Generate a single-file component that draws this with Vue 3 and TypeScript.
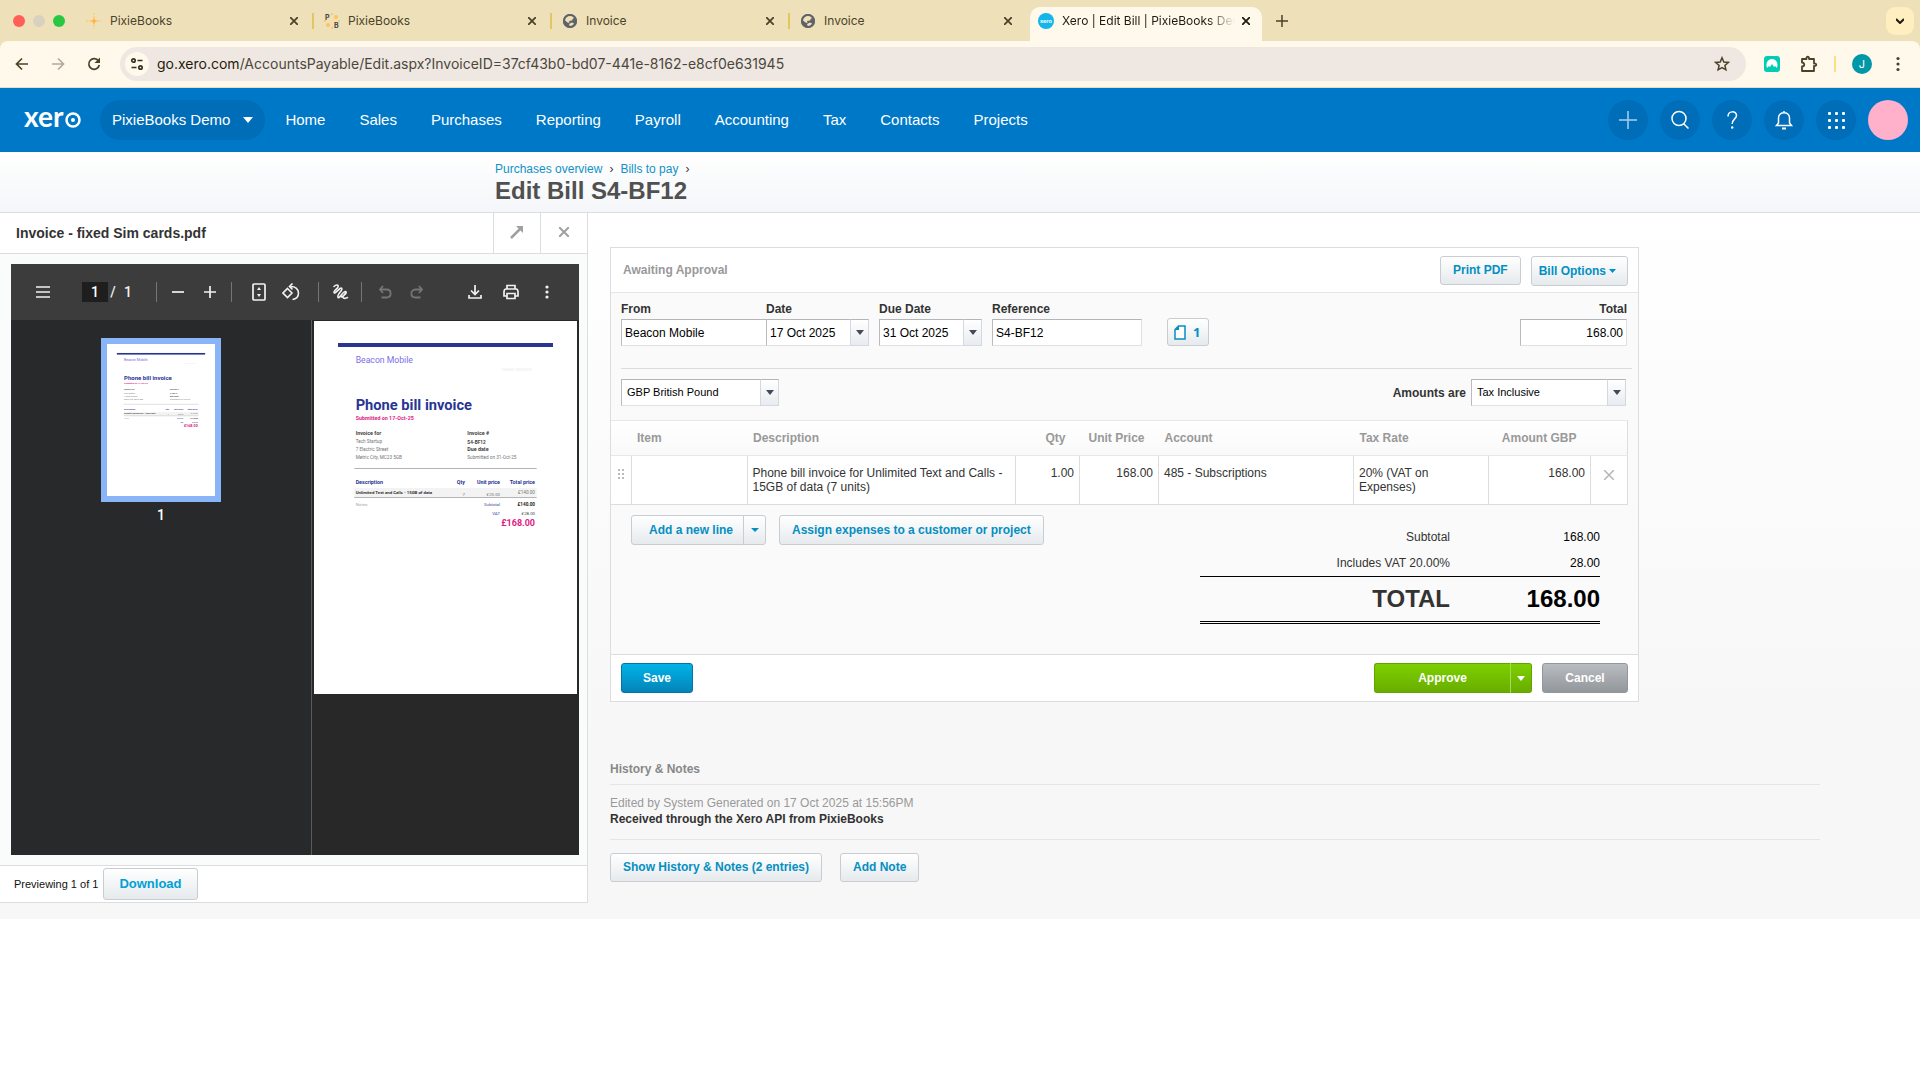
<script setup lang="ts">
import { h, ref } from 'vue'

interface Tab {
  title: string
  icon: 'spark' | 'pb' | 'globe' | 'xero'
  active?: boolean
}

const tabs: Tab[] = [
  { title: 'PixieBooks', icon: 'spark' },
  { title: 'PixieBooks', icon: 'pb' },
  { title: 'Invoice', icon: 'globe' },
  { title: 'Invoice', icon: 'globe' },
  { title: 'Xero | Edit Bill | PixieBooks Demo', icon: 'xero', active: true },
]

const nav = ['Home', 'Sales', 'Purchases', 'Reporting', 'Payroll', 'Accounting', 'Tax', 'Contacts', 'Projects']

const bill = ref({
  from: 'Beacon Mobile',
  date: '17 Oct 2025',
  due: '31 Oct 2025',
  reference: 'S4-BF12',
  total: '168.00',
  currency: 'GBP British Pound',
  tax: 'Tax Inclusive',
})

const lines = [
  {
    item: '',
    description: 'Phone bill invoice for Unlimited Text and Calls - 15GB of data (7 units)',
    qty: '1.00',
    price: '168.00',
    account: '485 - Subscriptions',
    tax: '20% (VAT on Expenses)',
    amount: '168.00',
  },
]

// Supplier document, drawn once as a full page and once as its thumbnail.
const navy = '#283593'
const pink = '#e01b84'
const dark = '#424242'
const grey = '#757575'

// [text, x, baseline, size, colour, bold, right-aligned]
type PageText = [string, number, number, number, string, boolean?, boolean?]
const pageTexts: PageText[] = [
  ['Beacon Mobile', 125, 126, 26, '#7a6ee6'],
  ['DEMO INVOICE', 653, 150, 13, '#ebebeb', false, true],
  ['Phone bill invoice', 125, 267, 44, navy, true],
  ['Submitted on 17-Oct-25', 125, 297, 16, pink, true],
  ['Invoice for', 125, 342, 16, dark, true],
  ['Tech Startup', 125, 366, 14, grey],
  ['7 Electric Street', 125, 390, 14, grey],
  ['Metric City, MC23 5GB', 125, 414, 14, grey],
  ['Invoice #', 460, 342, 16, dark, true],
  ['S4-BF12', 460, 368, 14, dark, true],
  ['Due date', 460, 390, 16, dark, true],
  ['Submitted on 31-Oct-25', 460, 414, 14, grey],
  ['Description', 125, 489, 16, navy, true],
  ['Qty', 453, 489, 16, navy, true, true],
  ['Unit price', 558, 489, 16, navy, true, true],
  ['Total price', 663, 489, 16, navy, true, true],
  ['Unlimited Text and Calls - 15GB of data', 125, 519, 13, '#333', true],
  ['7', 453, 524, 13, grey, false, true],
  ['£20.00', 558, 524, 13, grey, false, true],
  ['£140.00', 663, 519, 14, grey, false, true],
  ['Notes:', 125, 555, 13, '#a8a8a8'],
  ['Subtotal', 558, 555, 13, '#3d4aa8', false, true],
  ['£140.00', 663, 555, 14, '#222', true, true],
  ['VAT', 558, 581, 13, '#3d4aa8', false, true],
  ['£28.00', 663, 581, 13, '#444', false, true],
  ['£168.00', 663, 614, 27, pink, true, true],
]

const bar = (x: number, y: number, width: number, height: number, fill: string) =>
  h('rect', { x, y, width, height, fill })

const PdfPage = () =>
  h('svg', { viewBox: '0 0 789 1119', preserveAspectRatio: 'none', 'font-family': 'Roboto, sans-serif' }, [
    bar(0, 0, 789, 1119, '#fff'),
    bar(72, 66, 645, 12, navy),
    bar(121, 441, 547, 3, '#b4b4b4'),
    bar(121, 501, 547, 27, '#f3f3f3'),
    bar(121, 528, 547, 3, '#b4b4b4'),
    ...pageTexts.map(([text, x, y, size, fill, bold, right]) =>
      h(
        'text',
        { x, y, fill, 'font-size': size, 'font-weight': bold ? 700 : 400, 'text-anchor': right ? 'end' : 'start' },
        text,
      ),
    ),
  ])
</script>

<template>
  <div class="window">
    <header class="tabstrip">
      <div class="lights"><i class="l-close"></i><i class="l-min"></i><i class="l-max"></i></div>
      <div v-for="(t, i) in tabs" :key="i" class="tab" :class="{ active: t.active, divided: i < 3 }">
        <svg v-if="t.icon === 'spark'" width="18" height="18" viewBox="0 0 18 18">
          <path d="M9 1v16M1 9h16" stroke="#fbd28c" stroke-width="2" stroke-dasharray="2 1" />
          <path d="M9 5l1 3 3 1-3 1-1 3-1-3-3-1 3-1z" fill="#ffb43c" />
        </svg>
        <svg v-else-if="t.icon === 'pb'" width="18" height="18" viewBox="0 0 18 18">
          <circle cx="9" cy="9" r="4" fill="#f6dfa9" />
          <g fill="#f9c465"><circle cx="13" cy="5" r="2" /><circle cx="5" cy="13" r="2" /><circle cx="9" cy="2" r="1" /><circle cx="2" cy="9" r="1" /><circle cx="16" cy="9" r="1" /><circle cx="9" cy="16" r="1" /></g>
          <text x="2" y="8" class="pb">P</text><text x="11" y="16" class="pb">B</text>
        </svg>
        <svg v-else-if="t.icon === 'globe'" width="18" height="18" viewBox="0 0 18 18">
          <circle cx="9" cy="9" r="7" fill="#5f6368" />
          <path d="M9 3.500c2-.5 4 .7 5 2.500l-2 .5-1 2-3 .5.5 2-2-.5-3-2.500c.5-2.500 2-4 5.500-4.500zM8 12l3-1.500 2 1-1 2.500-3 1z" fill="#eee1b9" />
          <circle cx="9" cy="9" r="6" fill="none" stroke="#5f6368" stroke-width="2" />
        </svg>
        <svg v-else width="18" height="18" viewBox="0 0 18 18">
          <circle cx="9" cy="9" r="8" fill="#13b5ea" />
          <text x="9" y="11" text-anchor="middle" class="favx">xero</text>
        </svg>
        <span class="tab-title">{{ t.title }}</span>
        <button class="tab-x" aria-label="Close tab">
          <svg width="8" height="8" viewBox="0 0 8 8"><path d="M0 0l8 8M8 0L0 8" stroke="currentColor" stroke-width="1.800" /></svg>
        </button>
      </div>
      <button class="plus" aria-label="New tab">
        <svg width="12" height="12" viewBox="0 0 12 12"><path d="M6 0v12M0 6h12" stroke="#4b4329" stroke-width="1.500" /></svg>
      </button>
      <button class="tab-search" aria-label="Search tabs">
        <svg width="8" height="6" viewBox="0 0 8 6"><path d="M0 1l4 4 4-4" fill="none" stroke="#1f1b0e" stroke-width="2" /></svg>
      </button>
    </header>

    <div class="toolbar">
      <button class="tb" aria-label="Back"><svg width="16" height="16" viewBox="0 0 16 16"><path d="M14 8H3M8 2.500L2.500 8 8 13.500" fill="none" stroke="#4b4329" stroke-width="1.700" /></svg></button>
      <button class="tb" aria-label="Forward"><svg width="16" height="16" viewBox="0 0 16 16"><path d="M2 8h11M8 2.500L13.500 8 8 13.500" fill="none" stroke="#b3ab97" stroke-width="1.700" /></svg></button>
      <button class="tb" aria-label="Reload"><svg width="16" height="16" viewBox="0 0 16 16"><path d="M12.500 5A5.300 5.300 0 1 0 13.300 9" fill="none" stroke="#4b4329" stroke-width="1.700" /><path d="M14 1.500V7H8.500z" fill="#4b4329" /></svg></button>
      <div class="address">
        <button class="site" aria-label="Site information">
          <svg width="14" height="14" viewBox="0 0 14 14" fill="none" stroke="#35301f" stroke-width="1.700"><circle cx="3.500" cy="3.500" r="1.700" /><path d="M7.500 3.500h5M1.500 10.500h5" /><circle cx="10.500" cy="10.500" r="1.700" /></svg>
        </button>
        <span class="url"><b>go.xero.com</b>/AccountsPayable/Edit.aspx?InvoiceID=37cf43b0-bd07-441e-8162-e8cf0e631945</span>
        <button class="star" aria-label="Bookmark">
          <svg width="16" height="16" viewBox="0 0 16 16"><path d="M8 1.800l1.800 4.200 4.500.4-3.400 3 1 4.400L8 11.500l-3.900 2.300 1-4.400-3.400-3 4.500-.4z" fill="none" stroke="#4b4329" stroke-width="1.500" /></svg>
        </button>
      </div>
      <div class="ext">
        <svg width="16" height="16" viewBox="0 0 16 16"><rect width="16" height="16" rx="3" fill="#00cdb4" /><path d="M3 12C1 6 5 3 8 3s7 3 5 9l-2-2-1 1-2-3-2 3-1-1z" fill="#fff" /></svg>
        <svg width="18" height="18" viewBox="0 0 18 18"><path d="M2 4h4.500c-.5-3 3-3 2.500 0H14v4.500c3-.5 3 3 0 2.500V16H2v-4.500c3 0 3-4 0-4z" fill="none" stroke="#4b4329" stroke-width="1.800" stroke-linejoin="round" /></svg>
        <i class="ext-sep"></i>
        <span class="me">J</span>
        <svg width="4" height="16" viewBox="0 0 4 16" fill="#4b4329"><circle cx="2" cy="2.500" r="1.600" /><circle cx="2" cy="8" r="1.600" /><circle cx="2" cy="13.500" r="1.600" /></svg>
      </div>
    </div>

    <nav class="bluebar">
      <a href="#" class="logo" aria-label="Xero">
        <svg width="58" height="40" viewBox="0 0 58 40">
          <text x="0" y="27" class="logo-t">xer</text>
          <circle cx="49" cy="20" r="6.500" fill="none" stroke="#fff" stroke-width="2.500" />
          <circle cx="49" cy="20" r="2" fill="#fff" />
        </svg>
      </a>
      <button class="org">PixieBooks Demo <svg width="10" height="6" viewBox="0 0 10 6"><path d="M0 0h10L5 6z" fill="#fff" /></svg></button>
      <div class="links"><a v-for="n in nav" :key="n" href="#">{{ n }}</a></div>
      <div class="round">
        <button aria-label="Create new"><svg width="18" height="18" viewBox="0 0 18 18"><path d="M9 0v18M0 9h18" stroke="#a9d0ec" stroke-width="1.500" /></svg></button>
        <button aria-label="Search"><svg width="20" height="20" viewBox="0 0 20 20" fill="none" stroke="#fff" stroke-width="1.500"><circle cx="9" cy="8.500" r="7" /><path d="M13.500 13.500l5 5" /></svg></button>
        <button aria-label="Help"><svg width="12" height="20" viewBox="0 0 12 20"><path d="M2 6.500c0-6 8.500-6 8.500-1C10.500 9 6.200 9 6.200 14" fill="none" stroke="#fff" stroke-width="1.500" /><circle cx="6.200" cy="17.500" r="1.200" fill="#fff" /></svg></button>
        <button aria-label="Notifications"><svg width="20" height="20" viewBox="0 0 20 20" fill="none" stroke="#fff" stroke-width="1.500"><path d="M2.500 15.500h15L15.500 13V8c0-7-11-7-11 0v5zM10 1v2" /><path d="M8 18.500h4" stroke-width="2" /></svg></button>
        <button aria-label="Apps"><svg width="18" height="18" viewBox="0 0 18 18" fill="#fff"><g v-for="y in 3" :key="y"><rect v-for="x in 3" :key="x" :x="x * 7 - 6" :y="y * 7 - 6" width="3" height="3" rx="1" /></g></svg></button>
        <button class="avatar" aria-label="Profile"></button>
      </div>
    </nav>

    <section class="heading">
      <p><a href="#">Purchases overview</a><span>›</span><a href="#">Bills to pay</a><span>›</span></p>
      <h1>Edit Bill S4-BF12</h1>
    </section>

    <div class="workspace">
      <aside class="preview">
        <div class="preview-head">
          <h2>Invoice - fixed Sim cards.pdf</h2>
          <button aria-label="Expand"><svg width="14" height="14" viewBox="0 0 14 14"><path d="M1 13L10 4" stroke="#a0a0a0" stroke-width="2.500" /><path d="M6 1h7v7z" fill="#a0a0a0" /></svg></button>
          <button aria-label="Close preview"><svg width="10" height="10" viewBox="0 0 10 10"><path d="M0 0l10 10M10 0L0 10" stroke="#a0a0a0" stroke-width="2" /></svg></button>
        </div>
        <div class="viewer">
          <div class="pdfbar">
            <button aria-label="Menu"><svg width="14" height="12" viewBox="0 0 14 12"><path d="M0 1h14M0 6h14M0 11h14" stroke="currentColor" stroke-width="1.700" /></svg></button>
            <div class="pageno"><input aria-label="Page" value="1" /><span class="slash">/</span><span class="of">1</span></div>
            <i></i>
            <button aria-label="Zoom out"><svg width="12" height="12" viewBox="0 0 12 12"><path d="M0 6h12" stroke="currentColor" stroke-width="1.700" /></svg></button>
            <button aria-label="Zoom in"><svg width="12" height="12" viewBox="0 0 12 12"><path d="M0 6h12M6 0v12" stroke="currentColor" stroke-width="1.700" /></svg></button>
            <i></i>
            <button aria-label="Fit to page" class="p-fit"><svg width="14" height="18" viewBox="0 0 14 18"><rect x="1" y="1" width="12" height="16" rx="1" fill="none" stroke="currentColor" stroke-width="1.700" /><path d="M7 4l2 3H5zM7 14l2-3H5z" fill="currentColor" /></svg></button>
            <button aria-label="Rotate" class="p-rotate"><svg width="18" height="18" viewBox="0 0 18 18" fill="none" stroke="currentColor" stroke-width="1.600"><path d="M5.500 5.500L10 10l-4.500 4.500L1 10z" /><path d="M8 3.500c5-.5 8.500 2.500 8.500 6.500 0 3.500-2.500 6-6 6.500M10.500.5L7.500 3.500l3 3" /></svg></button>
            <i></i>
            <button aria-label="Draw"><svg width="18" height="18" viewBox="0 0 18 18" fill="none" stroke="currentColor" stroke-width="1.600" stroke-linecap="round"><path d="M3 3.500C5 1.500 8 1.500 7 4S2.500 7.500 3 9.500 7 7 9 5.500s2.500.5 1 2.500-4 4.500-3 6.500S12 8 14.500 8.500 11 12.500 12 14.500s3 .5 4.500 0M14.500 8.500c2 1-1 4-4 5.500" /></svg></button>
            <i></i>
            <button aria-label="Undo" class="off p-undo"><svg width="14" height="14" viewBox="0 0 14 14" fill="none" stroke="currentColor" stroke-width="1.800"><path d="M5 1L2 4.500 5 8M2 4.500h6.500c5.500 0 5.500 8 0 8H3.500" /></svg></button>
            <button aria-label="Redo" class="off"><svg width="14" height="14" viewBox="0 0 14 14" fill="none" stroke="currentColor" stroke-width="1.800"><path d="M9 1l3 3.500L9 8M12 4.500H5.500c-5.500 0-5.500 8 0 8h5" /></svg></button>
            <span class="grow"></span>
            <button aria-label="Download file" class="end"><svg width="14" height="14" viewBox="0 0 14 14" fill="none" stroke="currentColor" stroke-width="1.700"><path d="M7 0v9M3 5.500l4 4 4-4M1 10v3h12v-3" /></svg></button>
            <button aria-label="Print" class="end"><svg width="16" height="16" viewBox="0 0 16 16" fill="none" stroke="currentColor" stroke-width="1.700"><path d="M4 5V1.500h8V5M4 12H1V8c0-2 1-3 2-3h10c1 0 2 1 2 3v4h-3" /><path d="M4 9.500h8v5H4z" /></svg></button>
            <button aria-label="More" class="end"><svg width="4" height="14" viewBox="0 0 4 14" fill="currentColor"><circle cx="2" cy="2" r="1.600" /><circle cx="2" cy="7" r="1.600" /><circle cx="2" cy="12" r="1.600" /></svg></button>
          </div>
          <div class="pdfbody">
            <div class="thumbs">
              <div class="thumb"><PdfPage class="page" /></div>
              <span>1</span>
            </div>
            <div class="sheet"><PdfPage class="page" /></div>
          </div>
        </div>
        <div class="preview-foot"><span>Previewing 1 of 1</span><button class="btn">Download</button></div>
      </aside>

      <main>
        <form class="card" @submit.prevent>
          <div class="card-head">
            <strong>Awaiting Approval</strong>
            <button class="btn">Print PDF</button>
            <button class="btn opts">Bill Options<svg width="7" height="4" viewBox="0 0 7 4"><path d="M0 0h7L3.500 4z" fill="currentColor" /></svg></button>
          </div>

          <div class="fields">
            <div class="field from"><label for="from">From</label><input id="from" v-model="bill.from" /></div>
            <div class="field date">
              <label for="date">Date</label>
              <div class="combo"><input id="date" v-model="bill.date" /><button aria-label="Pick date"><i class="caret"></i></button></div>
            </div>
            <div class="field date">
              <label for="due">Due Date</label>
              <div class="combo"><input id="due" v-model="bill.due" /><button aria-label="Pick due date"><i class="caret"></i></button></div>
            </div>
            <div class="field refn"><label for="ref">Reference</label><input id="ref" v-model="bill.reference" /></div>
            <button class="btn files" aria-label="1 file attached">
              <svg width="12" height="15" viewBox="0 0 12 15"><path d="M4.500 1H11v13H1V4.500z" fill="#fff" stroke="#048fc2" stroke-width="1.500" /><path d="M1 5l4-4v4z" fill="#048fc2" /></svg>1
            </button>
            <div class="field total"><label for="total">Total</label><input id="total" v-model="bill.total" /></div>
          </div>

          <div class="terms">
            <span class="pick currency">
              <select v-model="bill.currency" aria-label="Currency"><option>GBP British Pound</option></select>
              <span class="arrow"><i class="caret"></i></span>
            </span>
            <label for="tax">Amounts are</label>
            <span class="pick tax">
              <select id="tax" v-model="bill.tax"><option>Tax Inclusive</option></select>
              <span class="arrow"><i class="caret"></i></span>
            </span>
          </div>

          <table>
            <colgroup>
              <col class="c-grip" /><col class="c-item" /><col /><col class="c-qty" /><col class="c-price" />
              <col class="c-account" /><col class="c-tax" /><col class="c-amount" /><col class="c-del" />
            </colgroup>
            <thead>
              <tr>
                <th></th><th>Item</th><th>Description</th><th class="num">Qty</th><th class="num">Unit Price</th>
                <th>Account</th><th>Tax Rate</th><th class="num">Amount GBP</th><th></th>
              </tr>
            </thead>
            <tbody>
              <tr v-for="(l, i) in lines" :key="i">
                <td class="grip"><svg width="8" height="12" viewBox="0 0 8 12" fill="#bbb"><g v-for="y in 3" :key="y"><rect x="1" :y="y * 4 - 3" width="2" height="2" /><rect x="5" :y="y * 4 - 3" width="2" height="2" /></g></svg></td>
                <td>{{ l.item }}</td>
                <td>{{ l.description }}</td>
                <td class="num">{{ l.qty }}</td>
                <td class="num">{{ l.price }}</td>
                <td>{{ l.account }}</td>
                <td>{{ l.tax }}</td>
                <td class="num">{{ l.amount }}</td>
                <td class="del"><button aria-label="Remove line"><svg width="10" height="10" viewBox="0 0 10 10"><path d="M0 0l10 10M10 0L0 10" stroke="#b5b5b5" stroke-width="1.500" /></svg></button></td>
              </tr>
            </tbody>
          </table>

          <div class="below">
            <div class="split">
              <button class="btn">Add a new line</button>
              <button class="btn" aria-label="Add several lines"><svg width="8" height="4" viewBox="0 0 8 4"><path d="M0 0h8L4 4z" fill="currentColor" /></svg></button>
            </div>
            <button class="btn">Assign expenses to a customer or project</button>
            <dl class="sums">
              <div><dt>Subtotal</dt><dd>168.00</dd></div>
              <div><dt>Includes VAT 20.00%</dt><dd>28.00</dd></div>
              <div class="grand"><dt>TOTAL</dt><dd>168.00</dd></div>
            </dl>
          </div>

          <div class="card-foot">
            <button class="act save">Save</button>
            <div class="approve">
              <button class="act">Approve</button>
              <button class="act" aria-label="Approve options"><svg width="8" height="5" viewBox="0 0 8 5"><path d="M0 0h8L4 5z" fill="#fff" /></svg></button>
            </div>
            <button class="act cancel">Cancel</button>
          </div>
        </form>

        <section class="history">
          <h3>History &amp; Notes</h3>
          <div class="entry">
            <p>Edited by System Generated on 17 Oct 2025 at 15:56PM</p>
            <strong>Received through the Xero API from PixieBooks</strong>
          </div>
          <div class="history-actions">
            <button class="btn">Show History &amp; Notes (2 entries)</button>
            <button class="btn">Add Note</button>
          </div>
        </section>
      </main>
    </div>
  </div>
</template>

<style>
body {
  margin: 0;
  background: #fff;
}
</style>

<style scoped>
* {
  box-sizing: border-box;
}
.window {
  font-family: 'Liberation Sans', Arial, sans-serif;
  font-size: 12px;
  line-height: 14px;
  color: #333;
}
button,
input,
select {
  font: inherit;
  margin: 0;
}
button {
  padding: 0;
  border: 0;
  background: none;
  color: inherit;
}
a {
  text-decoration: none;
}
svg {
  display: block;
  flex: none;
}

/* Browser tabs */
.tabstrip {
  display: flex;
  align-items: center;
  height: 41px;
  background: #eee1b9;
  font-family: Inter, sans-serif;
  color: #4b4329;
  position: relative;
  z-index: 1;
}
.lights {
  display: flex;
  gap: 8px;
  width: 77px;
  padding-left: 13px;
}
.lights i {
  width: 12px;
  height: 12px;
  border-radius: 50%;
}
.l-close {
  background: #ff5f57;
}
.l-min {
  background: #d8d1bf;
}
.l-max {
  background: #28c840;
}
.tab {
  display: flex;
  align-items: center;
  gap: 7px;
  width: 238px;
  height: 41px;
  padding: 0 17px 0 8px;
  position: relative;
}
.divided::after {
  content: '';
  position: absolute;
  right: 1px;
  top: 13px;
  width: 2px;
  height: 16px;
  background: #e3c65c;
}
.tab.active {
  width: 232px;
  height: 34px;
  align-self: flex-end;
  margin-left: 1px;
  padding: 0 12px 6px 7px;
  background: #fff9ec;
  border-radius: 10px 10px 0 0;
  color: #1f1b0e;
}
.tab-title {
  flex: 1;
  overflow: hidden;
  white-space: nowrap;
}
.active .tab-title {
  mask-image: linear-gradient(90deg, #000 84%, transparent);
}
.pb {
  font: 700 7px Inter, sans-serif;
  fill: #444;
}
.favx {
  font: 700 6px Lato, sans-serif;
  fill: #fff;
}
.plus {
  margin-left: 14px;
}
.tab-search {
  display: grid;
  place-items: center;
  width: 28px;
  height: 28px;
  margin: 0 6px 0 auto;
  border-radius: 9px;
  background: #feeec0;
}

/* Browser toolbar */
.toolbar {
  display: flex;
  align-items: center;
  height: 47px;
  padding: 0 20px 0 14px;
  background: #fff9ec;
  border-bottom: 1px solid #e6decb;
  border-radius: 8px 8px 0 0;
  box-shadow: 0 -8px 0 #eee1b9;
}
.tb {
  width: 16px;
  margin-right: 20px;
}
.address {
  flex: 1;
  display: flex;
  align-items: center;
  height: 34px;
  margin-left: -2px;
  padding: 0 16px 0 5px;
  border-radius: 17px;
  background: #efe7e1;
}
.site {
  display: grid;
  place-items: center;
  width: 24px;
  height: 24px;
  border-radius: 50%;
  background: #fff9ec;
}
.url {
  flex: 1;
  margin-left: 8px;
  font: 14px/20px Inter, sans-serif;
  color: #4b473c;
}
.url b {
  font-weight: 400;
  color: #1f1b0e;
}
.ext {
  display: flex;
  align-items: center;
  gap: 16px;
  margin-left: 18px;
}
.ext svg:first-child {
  margin-right: 4px;
}
.ext-sep {
  width: 2px;
  height: 16px;
  background: #fbdf87;
}
.me {
  width: 20px;
  height: 20px;
  margin-right: 8px;
  border-radius: 50%;
  background: #0097a7;
  color: #fff;
  font: 11px/20px Inter, sans-serif;
  text-align: center;
}

/* Product navigation */
.bluebar {
  display: flex;
  align-items: center;
  height: 64px;
  padding: 0 12px 0 24px;
  background: #0078c8;
  color: #fff;
  font-size: 15px;
  line-height: 18px;
}
.logo {
  width: 76px;
}
.logo-t {
  font: 700 28px Lato, sans-serif;
  fill: #fff;
}
.org {
  display: flex;
  align-items: center;
  gap: 13px;
  height: 40px;
  padding: 0 12px;
  border-radius: 20px;
  background: #006db8;
  white-space: nowrap;
}
.links {
  display: flex;
  gap: 34px;
  margin-left: 20px;
}
.links a {
  color: #fff;
}
.round {
  display: flex;
  gap: 12px;
  margin-left: auto;
}
.round button {
  display: grid;
  place-items: center;
  width: 40px;
  height: 40px;
  border-radius: 50%;
  background: #006db8;
}
.round .avatar {
  background: #ffb0ca;
}

.heading {
  height: 61px;
  padding: 10px 0 0 495px;
  background: linear-gradient(#fff, #f4f6f9);
  border-bottom: 1px solid #dcdee1;
}
.heading p {
  display: flex;
  gap: 7px;
  margin: 0;
}
.heading a {
  color: #1291c6;
}
.heading h1 {
  margin: 0;
  font-size: 24px;
  line-height: 30px;
  color: #505050;
}

/* Work area */
.workspace {
  display: flex;
  background: linear-gradient(#fff, #f7f7f7 520px);
}
.preview {
  flex: 0 0 588px;
  display: flex;
  flex-direction: column;
  margin-bottom: 16px;
  border: solid #dcdddf;
  border-width: 0 1px 1px 0;
  background: #fafcfb;
}
.preview-head {
  display: flex;
  height: 41px;
  background: #fff;
  border-bottom: 1px solid #dcdddf;
}
.preview-head h2 {
  flex: 1;
  margin: 0;
  padding-left: 16px;
  font-size: 14px;
  line-height: 40px;
}
.preview-head button {
  display: grid;
  place-items: center;
  width: 47px;
  padding-bottom: 3px;
  border-left: 1px solid #dcdddf;
}
.viewer {
  flex: 1;
  display: flex;
  flex-direction: column;
  margin: 10px 8px 10px 11px;
}
.pdfbar {
  display: flex;
  align-items: center;
  height: 56px;
  padding: 0 16px;
  background: #3c3c3c;
  color: #f1f1f1;
}
.pdfbar > i {
  width: 1px;
  height: 20px;
  margin: 0 5px;
  background: #757575;
}
.pdfbar button {
  display: grid;
  place-items: center;
  width: 32px;
}
.pdfbar .off {
  color: #757575;
}
.pdfbar .end {
  width: 36px;
}
.pdfbar .end:last-child {
  margin-right: -2px;
}
.pdfbar .p-fit,
.pdfbar .p-undo {
  margin-left: 6px;
}
.pdfbar .p-rotate {
  margin-right: 6px;
}
.pdfbar .p-undo {
  margin-left: 2px;
}
.grow {
  flex: 1;
}
.pageno {
  display: flex;
  align-items: center;
  width: 69px;
  margin-left: 23px;
  font: 500 14px/20px Roboto, sans-serif;
  text-align: center;
}
.slash {
  width: 10px;
}
.of {
  width: 20px;
}
.pageno input {
  width: 26px;
  height: 20px;
  padding: 0;
  border: 0;
  background: #1e1e1e;
  color: #fff;
  text-align: center;
}
.pdfbody {
  flex: 1;
  display: flex;
  background: #282828;
}
.thumbs {
  width: 301px;
  padding-top: 18px;
  border-right: 1px solid #5a5a5a;
  background: #28292b;
  color: #fff;
  font: 500 14px/20px Roboto, sans-serif;
  text-align: center;
}
.thumb {
  width: 120px;
  margin: 0 auto 3px;
  border: 6px solid #8ab4f8;
}
.thumb .page {
  height: 152px;
}
.sheet {
  flex: 1;
  padding: 1px 2px 0;
}
.page {
  display: block;
  width: 100%;
}
.preview-foot {
  display: flex;
  align-items: center;
  gap: 5px;
  height: 37px;
  padding-left: 14px;
  border-top: 1px solid #dcdddf;
  background: #fff;
  font-size: 11px;
  color: #111;
}
.preview-foot .btn {
  height: 32px;
  padding: 0 15px;
  font-size: 13px;
  color: #00a0d6;
}

/* Buttons */
.btn {
  height: 29px;
  padding: 0 12px 1px;
  border: 1px solid #c9cdd1;
  border-radius: 3px;
  background: linear-gradient(#fff, #e6eaed);
  color: #048fc2;
  font-weight: 700;
  white-space: nowrap;
}
.act {
  height: 30px;
  border: 1px solid;
  border-radius: 3px;
  color: #fff;
  font-weight: 700;
}
.save {
  width: 72px;
  border-color: #0375a3;
  background: linear-gradient(#00b3e8, #0484b8);
}
.approve .act {
  border-color: #62a300;
  background: linear-gradient(#7cd000, #69ad00);
}
.cancel {
  width: 86px;
  border-color: #92979b;
  background: linear-gradient(#b9bcc1, #92979b);
}

main {
  flex: 1;
  min-width: 0;
  padding: 34px 100px 37px 22px;
}
.card {
  max-width: 1029px;
  border: 1px solid #dcdde0;
  background: #fafafa;
}
.card-head {
  display: flex;
  gap: 10px;
  height: 45px;
  padding: 8px 10px 0 12px;
  border-bottom: 1px solid #e4e5e7;
  background: #fff;
}
.card-head strong {
  flex: 1;
  line-height: 29px;
  color: #999;
}
.card-head .opts {
  display: flex;
  align-items: center;
  gap: 3px;
  height: 30px;
  padding: 0 11px 0 7px;
}
.fields {
  display: flex;
  align-items: flex-end;
  margin: 0 6px 0 10px;
  padding: 9px 5px 22px 0;
  border-bottom: 1px solid #dcdddf;
}
.field {
  display: flex;
  flex-direction: column;
  gap: 3px;
}
label {
  font-weight: 700;
}
.field input,
.pick select {
  width: 100%;
  min-width: 0;
  height: 27px;
  padding: 0 3px;
  border: 1px solid #e0e1e4;
  border-top-color: #b3b5b9;
  border-left-color: #b9bbbf;
  border-radius: 0;
  background: #fff;
  color: #000;
}
.field.from {
  width: 145px;
}
.from input {
  border-right: 0;
}
.field.date {
  width: 103px;
  margin-right: 10px;
}
.refn {
  width: 150px;
}
.combo {
  display: flex;
}
.combo button,
.arrow {
  display: grid;
  place-items: center;
  flex: 0 0 19px;
  border: 1px solid #d5d8de;
  border-top-color: #b3b5b9;
  background: linear-gradient(#fff, #e8ebf0);
}
.combo input {
  border-right: 0;
}
.caret {
  border: solid transparent;
  border-width: 5px 4px 0;
  border-top-color: #444b57;
}
.files {
  display: flex;
  align-items: center;
  gap: 7px;
  height: 28px;
  margin-left: 25px;
  padding: 0 8px 0 6px;
  font: 700 13px 'Open Sans', sans-serif;
}
.total {
  width: 107px;
  margin-left: auto;
  text-align: right;
}
.total input {
  text-align: right;
}
.terms {
  display: flex;
  align-items: center;
  gap: 5px;
  padding: 10px 12px 14px 10px;
}
.terms label {
  margin-left: auto;
}
.pick {
  display: grid;
  grid-template-columns: 1fr 19px;
}
.pick select {
  grid-area: 1 / 1 / 2 / 3;
  appearance: none;
  padding: 0 5px 1px;
  font-size: 11px;
}
.arrow {
  grid-area: 1 / 2;
  pointer-events: none;
}
.currency {
  width: 158px;
}
.tax {
  width: 155px;
}

table {
  width: calc(100% - 10px);
  table-layout: fixed;
  border-collapse: collapse;
  border-right: 1px solid #dcdddf;
}
.c-grip {
  width: 20px;
}
.c-item {
  width: 116px;
}
.c-qty {
  width: 64px;
}
.c-price {
  width: 79px;
}
.c-account {
  width: 195px;
}
.c-tax {
  width: 135px;
}
.c-amount {
  width: 102px;
}
.c-del {
  width: 37px;
}
th,
td {
  text-align: left;
  vertical-align: top;
}
thead {
  background: linear-gradient(#fff, #f9f9f9);
}
th {
  height: 35px;
  padding: 0 14px 0 6px;
  border: solid #e6e7e9;
  border-width: 1px 0;
  vertical-align: middle;
  color: #999;
  white-space: nowrap;
}
tbody {
  background: #fff;
}
td {
  height: 49px;
  padding: 10px 5px;
  border: solid #dcdddf;
  border-width: 0 1px 1px;
}
td:first-child {
  border-left: 0;
}
td.grip {
  padding: 12px 0 0 6px;
}
td.del {
  padding: 13px 0 0 13px;
}
.num {
  text-align: right;
}

.below {
  display: flex;
  align-items: flex-start;
  gap: 13px;
  padding: 10px 38px 30px 20px;
}
.below .btn {
  height: 30px;
}
.split {
  display: flex;
}
.split .btn:first-child {
  padding: 0 10px 0 17px;
  border-radius: 3px 0 0 3px;
}
.split .btn:last-child {
  width: 23px;
  margin-left: -1px;
  padding: 0;
  border-radius: 0 3px 3px 0;
}
.split svg,
.approve svg {
  margin: 0 auto;
}
.sums {
  width: 400px;
  margin: 9px 0 0 auto;
  text-align: right;
}
.sums div {
  display: flex;
  justify-content: flex-end;
  height: 26px;
  line-height: 26px;
}
.sums dd {
  width: 150px;
  margin: 0;
  color: #000;
}
.sums .grand {
  height: 48px;
  line-height: 44px;
  border-top: 1px solid #000;
  border-bottom: 3px double #000;
  font-size: 24px;
  font-weight: 700;
}
.card-foot {
  display: flex;
  gap: 10px;
  padding: 8px 10px;
  border-top: 1px solid #dcdde0;
  background: #fff;
}
.approve {
  display: flex;
  margin-left: auto;
}
.approve .act:first-child {
  width: 137px;
  border-right-color: #a6d957;
  border-radius: 3px 0 0 3px;
}
.approve .act:last-child {
  width: 21px;
  border-left: 0;
  border-radius: 0 3px 3px 0;
}

.history h3 {
  margin: 60px 0 0;
  padding-bottom: 8px;
  font-size: 12px;
  line-height: 14px;
  color: #888;
}
.entry {
  padding: 10px 0 12px;
  border: solid #e4e5e7;
  border-width: 1px 0;
  line-height: 16px;
}
.entry p {
  margin: 0;
  color: #999;
}
.history-actions {
  display: flex;
  gap: 18px;
  padding-top: 13px;
}
</style>
